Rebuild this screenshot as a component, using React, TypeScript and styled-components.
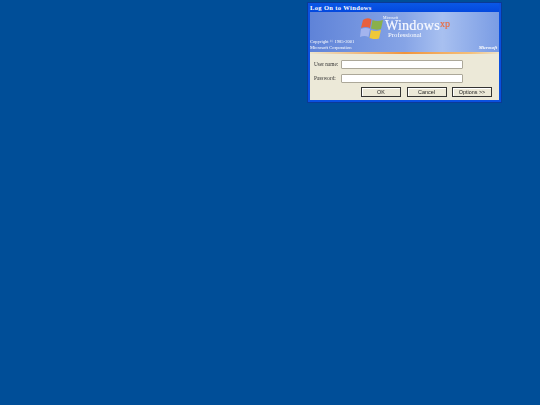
import React from "react";
import styled, { createGlobalStyle } from "styled-components";

const Global = createGlobalStyle`
  html, body { margin: 0; padding: 0; background: #004e98; width: 540px; height: 405px; overflow: hidden; }
  #root { width: 540px; height: 405px; }
  * { box-sizing: border-box; }
`;
const Desktop = styled.div`
  width: 540px; height: 405px; background: #004e98; padding: 3px 0 0 308px;
`;
const Dialog = styled.div`
  width: 193px; height: 99px; display: flex; flex-direction: column;
  background: #0a50e0; box-shadow: 0 0 0 1px #0a3a96; padding: 0 2px 2px;
`;
const TitleBar = styled.div`
  height: 9px; flex: none; display: flex; align-items: center;
  background: linear-gradient(180deg, #0a58e6, #0348de);
  color: #fff; font: bold 6.5px/9px "Liberation Serif", serif; letter-spacing: 0.36px;
`;
const Banner = styled.div`
  height: 40px; flex: none; display: flex; position: relative;
  background: linear-gradient(90deg, #5f83d8 0%, #86a4e6 50%, #a8c0f0 70%, #7a9ce4 100%);
  color: #fff; font-family: "Liberation Serif", serif;
  filter: blur(0.3px);
`;
const Copy = styled.div`
  position: absolute; left: 0; bottom: 2px; font-size: 4.6px; line-height: 5.5px; white-space: nowrap;
`;
const Logo = styled.svg`
  position: absolute; left: 50px; top: 6px; width: 23px; height: 21px;
`;
const Brand = styled.div`
  position: absolute; left: 73px; top: 4px; display: flex; flex-direction: column; white-space: nowrap;
`;
const Ms = styled.span`
  font-size: 3.8px; line-height: 4px;
`;
const Wordmark = styled.span`
  font-size: 14.2px; line-height: 11px; letter-spacing: 0.15px; margin-left: 2px; color: #f6f8ff;
  -webkit-text-stroke: 0.2px #f6f8ff;
  sup { font-size: 10px; line-height: 0; color: #ec6a3c; vertical-align: 3.5px; letter-spacing: 0; -webkit-text-stroke: 0.15px #ec6a3c; }
`;
const Edition = styled.span`
  font-size: 6.8px; line-height: 7px; margin-left: 5px; font-weight: normal;
`;
const MsMark = styled.span`
  position: absolute; right: 2px; bottom: 1px; font: italic bold 4.6px/6px "Liberation Serif", serif;
`;
const Stripe = styled.div`
  height: 2px; flex: none; background: linear-gradient(90deg, #ece4cc, #f0953c 50%, #f4c07c 85%, #ece4cc);
`;
const Body = styled.div`
  flex: 1; background: #ece9d8; padding: 6px 0 0 4px; display: flex; flex-direction: column;
`;
const Row = styled.div<{ $gap: number }>`
  display: flex; align-items: center; height: 9px; margin-bottom: ${p => p.$gap}px;
`;
const Label = styled.label`
  width: 27px; flex: none; color: #333; font: 5.3px/9px "Liberation Serif", serif; white-space: nowrap;
  filter: blur(0.25px);
`;
const Field = styled.div`
  width: 122px; height: 9px; background: #fff; border: 1px solid #aca899; border-radius: 1px;
`;
const Buttons = styled.div`
  display: flex; gap: 5.5px; margin-left: 47px;
`;
const Btn = styled.div`
  width: 40px; height: 10px; background: #ece9d8; display: flex; align-items: center; justify-content: center;
  border: 1px solid #333; box-shadow: inset 1px 1px 0 #fff;
  color: #222; font: 5.4px/8px "Liberation Sans", sans-serif;
  filter: blur(0.25px);
`;

export default function App() {
  return (
    <Desktop>
      <Global />
      <Dialog>
        <TitleBar>Log On to Windows</TitleBar>
        <Banner>
          <Logo viewBox="0 0 23 21">
            <path d="M3 2 Q7 -1 11.5 1.5 L10 10 Q6 8 1 10 Z" fill="#e8603c" />
            <path d="M12.5 2 Q17 4 23 2 L21 11 Q16 12.5 11 10.5 Z" fill="#8ab04a" />
            <path d="M1 11 Q5.5 9 10 11 L8.5 19 Q4.5 17 0 19 Z" fill="#a3b4ee" />
            <path d="M11 12 Q15.5 14 21 12 L19 20.5 Q14.5 22 9.5 20 Z" fill="#eec838" />
          </Logo>
          <Brand>
            <Ms>Microsoft</Ms>
            <Wordmark>Windows<sup>xp</sup></Wordmark>
            <Edition>Professional</Edition>
          </Brand>
          <Copy>Copyright © 1985-2001<br />Microsoft Corporation</Copy>
          <MsMark>Microsoft</MsMark>
        </Banner>
        <Stripe />
        <Body>
          <Row $gap={5}><Label>User name:</Label><Field /></Row>
          <Row $gap={4}><Label>Password:</Label><Field /></Row>
          <Buttons>
            <Btn>OK</Btn>
            <Btn>Cancel</Btn>
            <Btn>Options &gt;&gt;</Btn>
          </Buttons>
        </Body>
      </Dialog>
    </Desktop>
  );
}
